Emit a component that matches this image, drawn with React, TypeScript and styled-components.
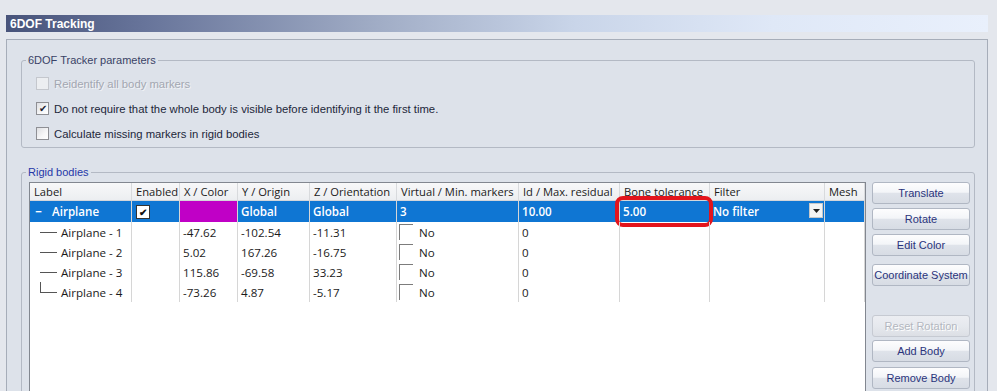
import styled, { createGlobalStyle, css } from "styled-components";

const GlobalStyle = createGlobalStyle`
  html, body {
    margin: 0;
    padding: 0;
    background: #e4e7ed;
    font-family: "Liberation Sans", Arial, sans-serif;
  }
  * { box-sizing: border-box; }
`;

const COLS = "102px 48px 58px 72px 87px 122px 101px 90px 115px 40px";

const HEADERS = [
  "Label",
  "Enabled",
  "X / Color",
  "Y / Origin",
  "Z / Orientation",
  "Virtual / Min. markers",
  "Id / Max. residual",
  "Bone tolerance",
  "Filter",
  "Mesh",
];

const CHILDREN = [
  { label: "Airplane - 1", x: "-47.62", y: "-102.54", z: "-11.31" },
  { label: "Airplane - 2", x: "5.02", y: "167.26", z: "-16.75" },
  { label: "Airplane - 3", x: "115.86", y: "-69.58", z: "33.23" },
  { label: "Airplane - 4", x: "-73.26", y: "4.87", z: "-5.17" },
];

const Page = styled.div`
  width: 997px;
  height: 391px;
  overflow: hidden;
  padding: 15px 9px 0 6px;
`;

const TitleBar = styled.div`
  height: 17px;
  padding-left: 4px;
  display: flex;
  align-items: center;
  background: linear-gradient(
    90deg,
    #47537a 0%,
    #67749a 14%,
    #a1adc6 38%,
    #c9d5e9 58%,
    #dfe8f7 78%,
    #e9f0fc 100%
  );
  color: #fff;
  font-weight: 700;
  font-size: 12px;
`;

const Panel = styled.div`
  margin-top: 7px;
  height: 400px;
  border: 1px solid #a6adb9;
  background: #dde2ea;
  padding: 14px 12px 0 14px;
`;

const Group = styled.fieldset<{ $top?: number }>`
  margin: ${({ $top }) => $top ?? 0}px 0 0 0;
  padding: 0;
  border: 1px solid #b3b9c4;
  border-radius: 3px;
  min-width: 0;
`;

const Legend = styled.legend<{ $blue?: boolean }>`
  margin-left: 4px;
  padding: 0 2px;
  font-size: 11px;
  line-height: 13px;
  color: ${({ $blue }) => ($blue ? "#2538a8" : "#3a4266")};
`;

const Options = styled.div`
  padding: 4px 0 1px 14px;
`;

const OptionRow = styled.label<{ $disabled?: boolean }>`
  height: 25px;
  display: flex;
  align-items: center;
  gap: 5px;
  font-size: 11.3px;
  color: ${({ $disabled }) => ($disabled ? "#a3a7b1" : "#22273a")};
  ${({ $disabled }) =>
    $disabled &&
    css`
      text-shadow: 1px 1px 0 rgba(255, 255, 255, 0.6);
    `}
`;

const Box = styled.span<{ $disabled?: boolean }>`
  width: 13px;
  height: 13px;
  display: inline-flex;
  align-items: center;
  justify-content: center;
  border: 1px solid ${({ $disabled }) => ($disabled ? "#c4c7cd" : "#8e8f94")};
  background: ${({ $disabled }) =>
    $disabled ? "#eceef1" : "linear-gradient(135deg, #dedfe2 0%, #f7f7f8 60%, #ffffff 100%)"};
  font-size: 10px;
  line-height: 1;
  color: #1c2130;
`;

const RigidContent = styled.div`
  display: flex;
  gap: 6px;
  padding: 3px 3px 0 7px;
`;

const Table = styled.div`
  width: 837px;
  height: 240px;
  border: 1px solid #828790;
  background: #fff;
  font-family: "Open Sans", "Noto Sans", sans-serif;
  font-size: 11.6px;
  color: #1b1b1b;
`;

const Row = styled.div<{ $height: number; $selected?: boolean }>`
  display: grid;
  grid-template-columns: ${COLS};
  height: ${({ $height }) => $height}px;
  ${({ $selected }) =>
    $selected &&
    css`
      background: #0f76d3;
      color: #fff;
      font-weight: 600;
    `}
`;

const HeadRow = styled(Row)`
  background: linear-gradient(#f8f8f9, #eceef1);
  border-bottom: 1px solid #d4d6da;
  font-size: 11.2px;
`;

const HeadCell = styled.div`
  display: flex;
  align-items: center;
  padding-left: 4px;
  border-right: 1px solid #d8dadd;
  white-space: nowrap;
  overflow: hidden;
`;

const Cell = styled.div<{ $fill?: string; $pad?: number }>`
  position: relative;
  display: flex;
  align-items: center;
  padding-left: ${({ $pad }) => $pad ?? 3}px;
  border-right: 1px solid #d6d6d6;
  white-space: nowrap;
  background: ${({ $fill }) => $fill ?? "transparent"};
`;

const Highlight = styled.div`
  position: absolute;
  left: -5px;
  right: -4px;
  top: -5px;
  bottom: -5px;
  border: 4px solid #e3141c;
  border-radius: 8px;
  pointer-events: none;
`;

const Minus = styled.span`
  width: 9px;
  margin-right: 9px;
  font-weight: 700;
  text-align: center;
`;

const CheckCell = styled.span`
  width: 14px;
  height: 14px;
  border: 1px solid #333;
  background: #fff;
  color: #111;
  font-size: 10px;
  display: inline-flex;
  align-items: center;
  justify-content: center;
  margin-left: 1px;
`;

const InsetBox = styled.span`
  width: 14px;
  height: 16px;
  border-top: 1px solid #7c7c7c;
  border-left: 1px solid #7c7c7c;
  margin-right: 6px;
`;

const DropButton = styled.span`
  position: absolute;
  right: 1px;
  top: 2px;
  width: 14px;
  height: 15px;
  background: #f4f4f4;
  border: 1px solid #c8c8c8;
  display: flex;
  align-items: center;
  justify-content: center;
`;

const Buttons = styled.div`
  width: 98px;
  display: flex;
  flex-direction: column;
`;

const Button = styled.button<{ $gap?: number }>`
  height: 22px;
  margin-top: ${({ $gap }) => $gap ?? 4}px;
  padding: 0;
  border: 1px solid #b0b7c3;
  border-radius: 3px;
  background: linear-gradient(#fdfdfe 0%, #f3f5f8 46%, #dfe3ea 52%, #d7dce4 100%);
  color: #2a347c;
  font-family: "Liberation Sans", Arial, sans-serif;
  font-size: 11px;
  white-space: nowrap;

  &:disabled {
    background: linear-gradient(#eceef2 0%, #e6e9ee 50%, #dcdfe5 100%);
    border-color: #c6cad2;
    color: #b3b7c0;
    text-shadow: 1px 1px 0 #fff;
  }
`;

const Branch = ({ last }: { last: boolean }) => (
  <svg width="18" height="20" viewBox="0 0 18 20" style={{ marginRight: 3 }}>
    {last && <line x1="0.5" y1="0" x2="0.5" y2="10.5" stroke="#555" strokeWidth="1" />}
    <line x1="0" y1="10.5" x2="17" y2="10.5" stroke="#555" strokeWidth="1" />
  </svg>
);

const App = () => (
  <>
    <GlobalStyle />
    <Page>
      <TitleBar>6DOF Tracking</TitleBar>
      <Panel>
        <Group>
          <Legend>6DOF Tracker parameters</Legend>
          <Options>
            <OptionRow $disabled>
              <Box $disabled />
              Reidentify all body markers
            </OptionRow>
            <OptionRow>
              <Box>✔</Box>
              Do not require that the whole body is visible before identifying it the first time.
            </OptionRow>
            <OptionRow>
              <Box />
              Calculate missing markers in rigid bodies
            </OptionRow>
          </Options>
        </Group>

        <Group $top={18}>
          <Legend $blue>Rigid bodies</Legend>
          <RigidContent>
            <Table>
              <HeadRow $height={18}>
                {HEADERS.map((h) => (
                  <HeadCell key={h}>{h}</HeadCell>
                ))}
              </HeadRow>
              <Row $height={21} $selected>
                <Cell $pad={4}>
                  <Minus>−</Minus>Airplane
                </Cell>
                <Cell>
                  <CheckCell>✔</CheckCell>
                </Cell>
                <Cell $fill="#c000c6" />
                <Cell>Global</Cell>
                <Cell>Global</Cell>
                <Cell>3</Cell>
                <Cell>10.00</Cell>
                <Cell>
                  5.00
                  <Highlight />
                </Cell>
                <Cell>
                  No filter
                  <DropButton>
                    <svg width="7" height="4" viewBox="0 0 7 4">
                      <path d="M0 0 H7 L3.5 4 Z" fill="#222" />
                    </svg>
                  </DropButton>
                </Cell>
                <Cell />
              </Row>
              {CHILDREN.map((c, i) => (
                <Row key={c.label} $height={20}>
                  <Cell $pad={10}>
                    <Branch last={i === CHILDREN.length - 1} />
                    {c.label}
                  </Cell>
                  <Cell />
                  <Cell>{c.x}</Cell>
                  <Cell>{c.y}</Cell>
                  <Cell>{c.z}</Cell>
                  <Cell $pad={2}>
                    <InsetBox />
                    No
                  </Cell>
                  <Cell>0</Cell>
                  <Cell />
                  <Cell />
                  <Cell />
                </Row>
              ))}
            </Table>
            <Buttons>
              <Button $gap={0}>Translate</Button>
              <Button>Rotate</Button>
              <Button>Edit Color</Button>
              <Button $gap={8}>Coordinate System</Button>
              <Button $gap={29} disabled>
                Reset Rotation
              </Button>
              <Button $gap={3}>Add Body</Button>
              <Button $gap={5}>Remove Body</Button>
            </Buttons>
          </RigidContent>
        </Group>
      </Panel>
    </Page>
  </>
);

export default App;
